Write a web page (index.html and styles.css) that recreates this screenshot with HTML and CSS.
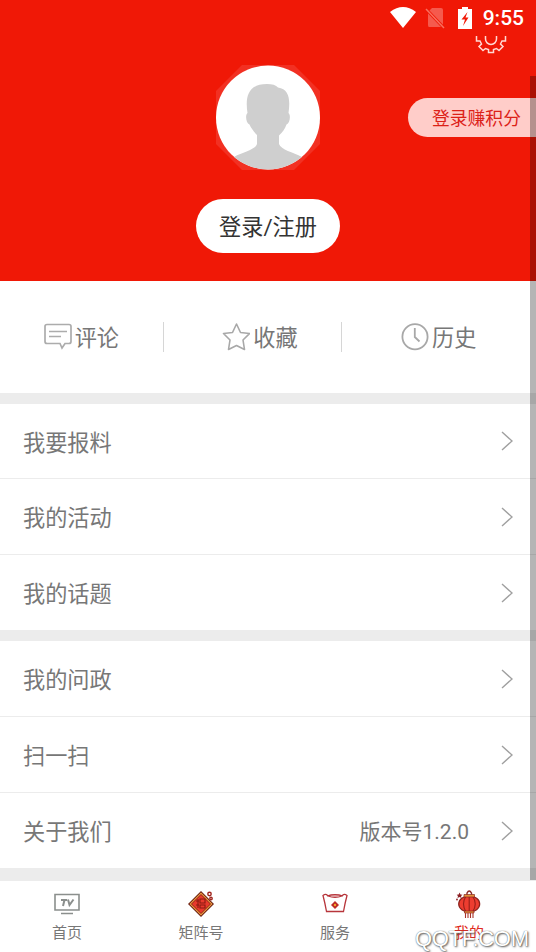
FILE: index.html
```html
<!DOCTYPE html>
<html lang="zh-CN">
<head>
<meta charset="utf-8">
<title>我的</title>
<link rel="stylesheet" href="styles.css">
</head>
<body>
<div class="app">
  <header class="hero">
    <div class="status">
      <svg class="wifi" width="28" height="22" viewBox="0 0 28 22"><path d="M1 5Q14-5 27 5L14 21Z" fill="#fff"/></svg>
      <svg class="sim" width="20" height="22" viewBox="0 0 20 22"><path d="M7 1H16Q18 1 18 3V20H4Q3 20 3 18V5Z" fill="#f55a4d"/><path d="M1 2L19 21" stroke="#f01806" stroke-width="3"/><path d="M1 2L19 21" stroke="#f8705f" stroke-width="1.500"/></svg>
      <svg class="battery" width="14" height="22" viewBox="0 0 14 22"><path d="M4 0H10V2H14V22H0V2H4Z" fill="#fff"/><path d="M9.500 5L3.500 12.500H7L5 19L10.500 10.500H7.500Z" fill="#f01a08"/></svg>
      <span class="time">9:55</span>
    </div>
    <svg class="gear" width="32" height="18" viewBox="0 0 32 18"><g fill="none" stroke="#ffd9d4" stroke-width="1.500"><path d="M1.500 0V5H5L6.500 8L4 10.500L8 14.500L10.500 12.500L13.500 13.500V16.500H18.500V13.500L21.500 12.500L24 14.500L28 10.500L25.500 8L27 5H30.500V0"/><path d="M10.500 0V3A5.500 5.500 0 0 0 21.500 3V0"/></g></svg>
    <div class="avatar">
      <svg width="104" height="105" viewBox="0 0 104 105">
        <path d="M26 0H78L104 26V79L78 105H26L0 79V26Z" fill="#f23022"/>
        <clipPath id="face"><circle cx="52" cy="52.500" r="52"/></clipPath>
        <circle cx="52" cy="52.500" r="52" fill="#fff"/>
        <path clip-path="url(#face)" d="M31.500 48C29 32 32 19 51 19C56 19 60 20 62 22.500C73 24 74.500 34 72.500 48C75 50 74 58 70.500 59.500C69 64 66 68 63 70.500V79C65 85 77 87 86 92L80 110H24L18 92C27 87 39 85 41 79V70C38 67 35 63 33.500 59.500C30 58 29 50 31.500 48Z" fill="#cfcfcf"/>
      </svg>
    </div>
    <a class="login">登录/注册</a>
    <a class="points">登录赚积分</a>
  </header>

  <nav class="shortcuts">
    <a class="shortcut"><svg width="28" height="28" viewBox="0 0 28 28"><g fill="none" stroke="#acacac" stroke-width="1.700"><path d="M3 1.500H25Q27 1.500 27 3.500V18.500Q27 20.500 25 20.500H21L18 25L16 20.500H3Q1 20.500 1 18.500V3.500Q1 1.500 3 1.500ZM5 8.500H23M5 13.500H17"/></g></svg><span>评论</span></a>
    <a class="shortcut"><svg width="28" height="28" viewBox="0 0 28 28"><path d="M14.500 1L18.500 9.500L27.500 10.500L21 17L22.500 26.500L14.500 22.500L6.500 26.500L8 17L1.500 10.500L10.500 9.500Z" fill="none" stroke="#a8a8a8" stroke-width="1.600" stroke-linejoin="round"/></svg><span>收藏</span></a>
    <a class="shortcut"><svg width="28" height="28" viewBox="0 0 28 28"><g fill="none" stroke="#a8a8a8" stroke-width="1.800"><circle cx="14" cy="13.800" r="12.600"/><path d="M13.800 5V14L18.500 18.500"/></g></svg><span>历史</span></a>
  </nav>

  <section class="list">
    <a class="row"><span>我要报料</span><svg class="chevron" viewBox="0 0 12 20"><path d="M1 1L11 10L1 19"/></svg></a>
    <a class="row"><span>我的活动</span><svg class="chevron" viewBox="0 0 12 20"><path d="M1 1L11 10L1 19"/></svg></a>
    <a class="row"><span>我的话题</span><svg class="chevron" viewBox="0 0 12 20"><path d="M1 1L11 10L1 19"/></svg></a>
  </section>
  <section class="list">
    <a class="row"><span>我的问政</span><svg class="chevron" viewBox="0 0 12 20"><path d="M1 1L11 10L1 19"/></svg></a>
    <a class="row"><span>扫一扫</span><svg class="chevron" viewBox="0 0 12 20"><path d="M1 1L11 10L1 19"/></svg></a>
    <a class="row"><span>关于我们</span><span class="version">版本号1.2.0</span><svg class="chevron" viewBox="0 0 12 20"><path d="M1 1L11 10L1 19"/></svg></a>
  </section>

  <footer class="tabs">
    <a class="tab">
      <svg width="28" height="30" viewBox="0 0 28 30"><g fill="none" stroke="#8b8f8d" stroke-width="1.600"><path d="M2 6.500H26V22H2ZM8 25.500H20"/><path d="M8 12H14M11.500 12L10 18M15 11.500L16.500 17L20.500 11.500" stroke-width="2"/></g></svg>
      <span>首页</span>
    </a>
    <a class="tab">
      <svg width="28" height="30" viewBox="0 0 28 30"><path d="M14 3L27 16L14 29L1 16Z" fill="#6d1f12"/><path d="M14 4.500L25.500 16L14 27.500L2.500 16Z" fill="#f2a545"/><path d="M14 6.500L23.500 16L14 25.500L4.500 16Z" fill="#e9392c" stroke="#8d1f15"/><path d="M11 11V20M9 13H12M9 17H12M13 11H18V15H13ZM13 17H18V20H13Z" fill="none" stroke="#8a1a12" stroke-width="1.100"/><g fill="#fff" stroke="#9f241d" stroke-width="1.400"><circle cx="22.500" cy="6" r="1.700"/><circle cx="24" cy="10.500" r="1.200"/></g></svg>
      <span>矩阵号</span>
    </a>
    <a class="tab">
      <svg width="28" height="30" viewBox="0 0 28 30"><path d="M2 7.500Q5 5 7 8Q14 10.500 21 8Q23 5 26 7.500Q24 15 22.500 23.500H5.500Q4 15 2 7.500ZM6 8Q14 5.500 22 8" fill="none" stroke="#b7353b" stroke-width="1.300"/><path d="M14 13L18 17L14 21L10 17Z" fill="#bd2a29"/><circle cx="14" cy="17" r="1.200" fill="#f4a62a"/></svg>
      <span>服务</span>
    </a>
    <a class="tab active">
      <svg width="28" height="30" viewBox="0 0 28 30"><g transform="translate(0 1)"><path d="M12 6V4Q14.200 0 16.500 4V6" fill="none" stroke="#8a2925" stroke-width="1.400"/><ellipse cx="14.200" cy="15" rx="10.500" ry="8" fill="#ed3d30" stroke="#8b211c" stroke-width="1.200"/><path d="M11 7Q6 15 11 23M14.200 7V23M17.500 7Q23 15 17.500 23" fill="none" stroke="#982019" stroke-width="1.100"/><path d="M9 5.500H19.500V8H9ZM9.500 22H19V24H9.500Z" fill="#e59139" stroke="#8a2925" stroke-width=".7"/><path d="M10.500 24V29M13 24V29M15.500 24V29M18 24V29" stroke="#a9332b" stroke-width="1.100"/><path d="M4.500 3.500L5.500 5.500L7.500 5.700L6 7L6.500 9L4.500 8L2.500 9L3 7L1.700 5.700L3.700 5.500Z" fill="#8b1f24"/><circle cx="2" cy="10.500" r=".9" fill="#8b1f24"/></g></svg>
      <span>我的</span>
    </a>
  </footer>
  <div class="watermark">QQTF.COM</div>
  <div class="scrollbar"></div>
</div>
</body>
</html>
```
FILE: styles.css
```css
* { box-sizing: border-box; }
body { margin: 0; background: #fff; }
.app {
  position: relative;
  width: 536px;
  height: 952px;
  overflow: hidden;
  font-family: Roboto, "Noto Sans CJK SC", sans-serif;
  color: #777;
  font-size: 22.2px;
}
.hero {
  position: relative;
  height: 281px;
  background: #f01806;
  display: flex;
  flex-direction: column;
  align-items: center;
}
.status {
  align-self: stretch;
  height: 36px;
  display: flex;
  justify-content: flex-end;
  align-items: center;
  padding-right: 12px;
  color: #fff;
}
.sim { margin-left: 8px; }
.battery { margin-left: 13px; }
.time { margin-left: 11px; font-size: 21px; font-weight: 500; line-height: 38px; }
.gear { position: absolute; left: 475px; top: 36px; }
.avatar { margin-top: 29px; height: 105px; }
.avatar svg { display: block; }
.login {
  margin-top: 29px;
  width: 144px;
  height: 54px;
  border-radius: 27px;
  background: #fff;
  color: #333;
  text-align: center;
  line-height: 57px;
}
.points {
  position: absolute;
  right: 0;
  top: 98px;
  width: 128px;
  height: 39px;
  padding-left: 24px;
  border-radius: 20px 0 0 20px;
  background: #ffcdc9;
  color: #dc2118;
  font-size: 17.8px;
  line-height: 41px;
  white-space: nowrap;
}
.shortcuts {
  height: 112px;
  display: grid;
  grid-template-columns: repeat(3, 1fr);
  align-items: center;
}
.shortcut {
  height: 30px;
  margin-right: 15px;
  display: flex;
  align-items: center;
  justify-content: center;
  gap: 3px;
  line-height: 30px;
  border-right: 1px solid #d6d6d6;
}
.shortcut span { padding-top: 2px; }
.shortcut:last-child { border-color: transparent; }
.list { border-top: 11px solid #ececec; }
.row {
  height: 76px;
  padding: 0 23px;
  display: flex;
  align-items: center;
  line-height: 30px;
  border-bottom: 1px solid #ececec;
}
.row span { padding-top: 3px; }
.list:first-of-type .row:first-child { height: 75px; }
.row:last-child { height: 75px; border-bottom: 0; }
.version { margin-left: auto; margin-right: 32px; font-size: 21px; }
.chevron {
  width: 12px;
  height: 20px;
  margin-left: auto;
  fill: none;
  stroke: #a0a0a0;
  stroke-width: 1.4;
}
.version + .chevron { margin-left: 0; }
.tabs {
  height: 84px;
  border-top: 13px solid #ececec;
  display: grid;
  grid-template-columns: repeat(4, 1fr);
}
.tab {
  display: flex;
  flex-direction: column;
  align-items: center;
  padding-top: 7px;
  font-size: 15px;
  line-height: 20px;
}
.tab span { margin-top: 5px; }
.tab.active { color: #e02b22; }
.watermark {
  position: absolute;
  left: 415px;
  top: 926px;
  font: 22px/26px "Liberation Sans", sans-serif;
  letter-spacing: -0.3px;
  color: #fff;
  text-shadow: 0 0 1px #555, 1px 1px 2px #555;
}
.scrollbar {
  position: absolute;
  right: 0;
  top: 76px;
  width: 6px;
  height: 804px;
  background: rgba(0, 0, 0, .29);
}
```
